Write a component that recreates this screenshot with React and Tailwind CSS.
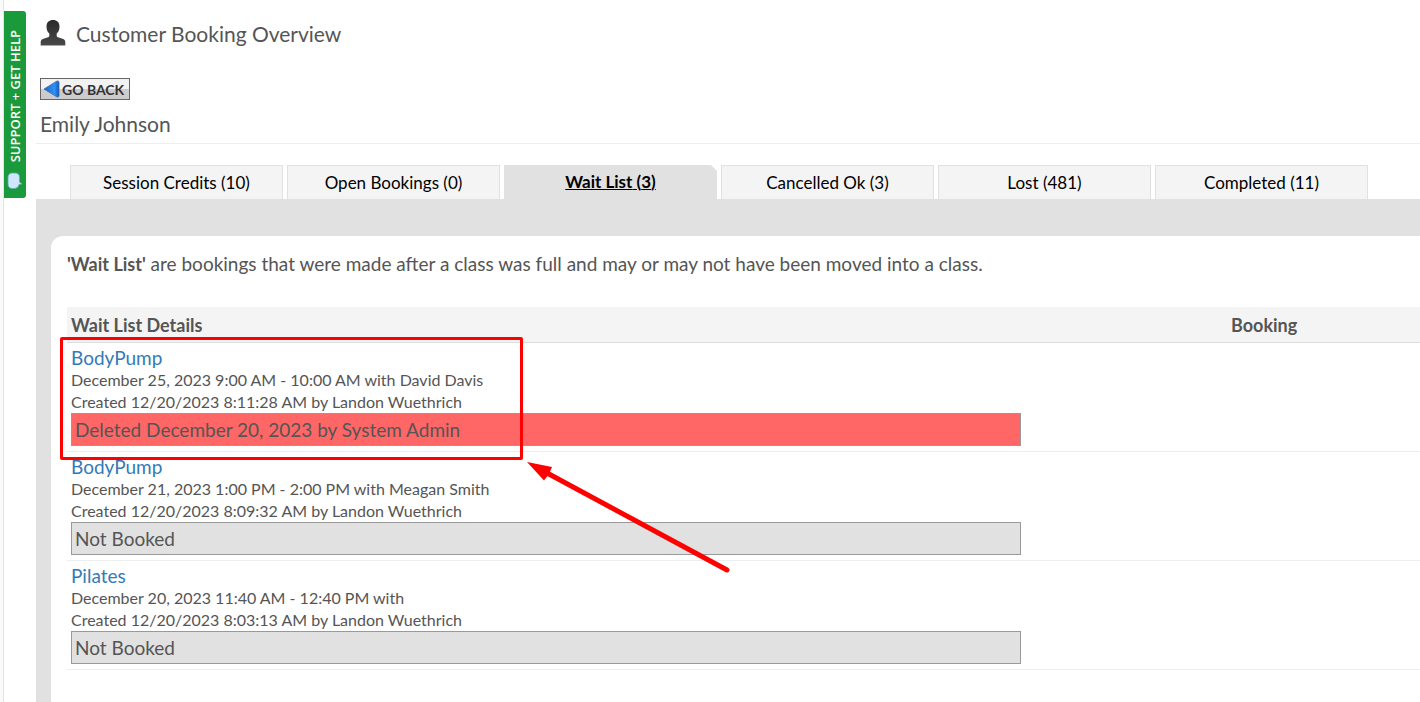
const tabs = [
  { label: "Session Credits", count: 10 },
  { label: "Open Bookings", count: 0 },
  { label: "Wait List", count: 3, active: true },
  { label: "Cancelled Ok", count: 3 },
  { label: "Lost", count: 481 },
  { label: "Completed", count: 11 },
];

const bookings = [
  {
    name: "BodyPump",
    time: "December 25, 2023 9:00 AM - 10:00 AM with David Davis",
    created: "Created 12/20/2023 8:11:28 AM by Landon Wuethrich",
    status: "Deleted December 20, 2023 by System Admin",
    deleted: true,
  },
  {
    name: "BodyPump",
    time: "December 21, 2023 1:00 PM - 2:00 PM with Meagan Smith",
    created: "Created 12/20/2023 8:09:32 AM by Landon Wuethrich",
    status: "Not Booked",
  },
  {
    name: "Pilates",
    time: "December 20, 2023 11:40 AM - 12:40 PM with",
    created: "Created 12/20/2023 8:03:13 AM by Landon Wuethrich",
    status: "Not Booked",
  },
];

const UserIcon = () => (
  <svg width="26" height="28" viewBox="0 0 26 28" aria-hidden="true">
    <defs>
      <linearGradient id="user" x1="0" y1="0" x2="0" y2="1">
        <stop offset="0" stopColor="#2b2b2b" />
        <stop offset="1" stopColor="#484848" />
      </linearGradient>
    </defs>
    <path
      d="M13 0c-4 0-6.500 2.400-6.500 6.400 0 3.200 1 5.600 2.800 7.200v2.200c0 .8-.5 1.200-1.300 1.500L3.500 18.800C1.600 19.500 .7 20.500 .7 22V25h24.600v-3c0-1.500-.9-2.500-2.800-3.200l-4.500-1.500c-.8-.3-1.300-.7-1.300-1.500v-2.200c1.800-1.600 2.800-4 2.800-7.200C19.500 2.400 17 0 13 0z"
      fill="url(#user)"
    />
    <path d="M.7 25.500h24.600" stroke="#a8a8a8" />
  </svg>
);

const BackIcon = () => (
  <svg width="17" height="18" viewBox="0 0 17 18" aria-hidden="true">
    <defs>
      <linearGradient id="back" x1="0" y1="0" x2="1" y2="0">
        <stop offset="0" stopColor="#1d62c4" />
        <stop offset="0.700" stopColor="#2f93f5" />
        <stop offset="1" stopColor="#1456b8" />
      </linearGradient>
    </defs>
    <path
      d="M1 9 14 1q2-.5 2 1.500v13q0 2-2 1.500z"
      fill="url(#back)"
      stroke="#3a6cb4"
      strokeWidth="0.800"
      strokeLinejoin="round"
    />
  </svg>
);

const ChatIcon = () => (
  <svg width="16" height="18" viewBox="0 0 16 18" aria-hidden="true">
    <path
      d="M5.500 1h2.500q4.500 0 4.500 4.500v4.500l2.500 2-3 .5q-.8 4-4.500 4h-2q-4.500 0-4.500-4.500v-6.500q0-4.500 4.500-4.500z"
      fill="#cfe6fd"
      stroke="#5fa8b8"
      strokeWidth="0.800"
    />
  </svg>
);

const SupportTab = () => (
  <a
    href="#support"
    className="absolute left-1 top-[11px] flex h-[187px] w-[22px] flex-col items-center justify-end gap-[10px] rounded-r-[3px] bg-[#1b9a3b] pb-2"
  >
    <span className="rotate-180 whitespace-nowrap font-['Open_Sans',sans-serif] text-[13px] font-semibold leading-[22px] text-white [writing-mode:vertical-rl]">
      SUPPORT + GET HELP
    </span>
    <ChatIcon />
  </a>
);

const Tabs = () => (
  <nav className="flex gap-1 pl-[34px] pr-4">
    {tabs.map((tab) => (
      <a
        key={tab.label}
        href="#tab"
        className={`flex h-[34px] w-[213px] items-center justify-center text-[17px] text-black ${
          tab.active
            ? "bg-[#e1e1e1] font-bold underline [clip-path:polygon(0_0,calc(100%-6px)_0,100%_6px,100%_100%,0_100%)]"
            : "border border-b-0 border-[#e1e1e1] bg-[#f4f4f4]"
        }`}
      >
        {tab.label} ({tab.count})
      </a>
    ))}
  </nav>
);

// Red box and arrow that point out the deleted booking
const Callout = () => (
  <>
    <div className="pointer-events-none absolute -left-[7px] top-[30px] h-[123px] w-[463px] rounded-[2px] border-3 border-[#ff0000]" />
    <svg
      className="pointer-events-none absolute left-[458px] top-[152px]"
      width="210"
      height="116"
      viewBox="0 0 210 116"
      aria-hidden="true"
    >
      <path
        d="M23 14.500 202 111"
        stroke="#ff0000"
        strokeWidth="5"
        strokeLinecap="round"
      />
      <path d="M2 3 27 8 24 15 19 21.500z" fill="#ff0000" />
    </svg>
  </>
);

const WaitListTable = () => (
  <div className="relative mt-[31px]">
    <table className="w-full table-fixed border-separate border-spacing-0 text-left">
      <thead>
        <tr className="h-9 bg-[#f4f4f4] text-[18px] leading-6">
          <th className="border-b border-[#dddddd] px-1 py-0 font-bold">
            Wait List Details
          </th>
          <th className="w-[193px] border-b border-[#dddddd] px-1 py-0 font-bold">
            Booking
          </th>
        </tr>
      </thead>
      <tbody>
        {bookings.map((b) => (
          <tr key={b.created}>
            <td className="border-b border-[#eeeeee] px-1 pb-[5px] pt-1 text-[16px] leading-[22px]">
              <a href="#class" className="block text-[19px] text-[#337ab7]">
                {b.name}
              </a>
              <p>{b.time}</p>
              <p>{b.created}</p>
              <div
                className={`h-[33px] w-33/40 border border-[#999999] px-[3px] text-[19px] leading-[31px] ${
                  b.deleted ? "bg-[#ff6666]" : "bg-[#e1e1e1]"
                }`}
              >
                {b.status}
              </div>
            </td>
            <td className="border-b border-[#eeeeee]" />
          </tr>
        ))}
      </tbody>
    </table>
    <Callout />
  </div>
);

const App = () => {
  return (
    <div className="relative flex min-h-screen bg-white font-[Lato,sans-serif] text-[#555555]">
      <div className="w-1 shrink-0 border-r border-[#e4e4e4] bg-[#fafafa]" />
      <SupportTab />

      <main className="ml-8 flex min-w-0 flex-1 flex-col">
        <header className="border-b border-[#eeeeee] pl-1">
          <h1 className="flex items-center gap-[10px] pt-[19px] text-[21px] leading-[30px]">
            <UserIcon />
            Customer Booking Overview
          </h1>
          <button
            type="button"
            className="mt-[29px] flex h-[22px] items-center gap-[2px] border border-[#666666] bg-linear-to-b from-[#f2f2f2] from-50% to-[#cccccc] to-50% pl-[2px] pr-[5px] text-[14px] font-bold text-[#333333]"
          >
            <BackIcon />
            GO BACK
          </button>
          <h2 className="pb-1 pt-[9px] text-[21px] leading-[30px]">
            Emily Johnson
          </h2>
        </header>

        <div className="mt-[21px] flex flex-1 flex-col">
          <Tabs />
          <div className="flex flex-1 flex-col bg-[#e1e1e1] pl-[15px] pt-[37px]">
            <section className="flex-1 rounded-tl-[12px] bg-white pl-4 pt-4">
              <p className="text-[19px] leading-6">
                <b className="text-[18px]">'Wait List'</b> are bookings that
                were made after a class was full and may or may not have been
                moved into a class.
              </p>
              <WaitListTable />
            </section>
          </div>
        </div>
      </main>
    </div>
  );
};

export default App;
